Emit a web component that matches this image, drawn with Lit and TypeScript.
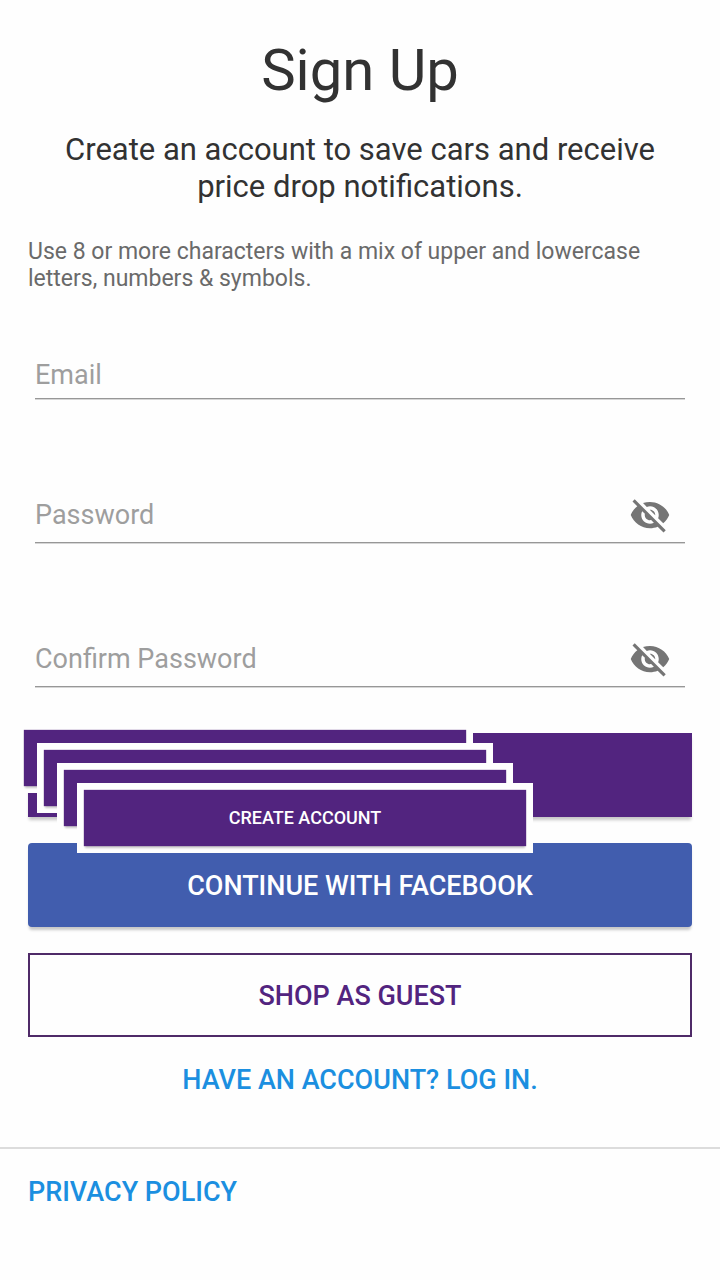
import { LitElement, html, css, svg } from "lit";
import { customElement, property, state } from "lit/decorators.js";
import { classMap } from "lit/directives/class-map.js";

const eyeOff = svg`<path d="M12 7c2.76 0 5 2.24 5 5 0 .65-.13 1.26-.36 1.83l2.92 2.92c1.51-1.26 2.7-2.89 3.43-4.75-1.73-4.39-6-7.5-11-7.5-1.4 0-2.74.25-3.98.7l2.16 2.16C10.74 7.13 11.35 7 12 7zM2 4.27l2.28 2.28.46.46C3.08 8.3 1.78 10.02 1 12c1.73 4.39 6 7.5 11 7.5 1.55 0 3.03-.3 4.38-.84l.42.42L19.73 22 21 20.73 3.27 3 2 4.27zM7.53 9.8l1.55 1.55c-.05.21-.08.43-.08.65 0 1.66 1.34 3 3 3 .22 0 .44-.03.65-.08l1.55 1.55c-.67.33-1.41.53-2.2.53-2.76 0-5-2.24-5-5 0-.79.2-1.53.53-2.2zm4.31-.78l3.15 3.15.02-.16c0-1.66-1.34-3-3-3l-.17.01z"/>`;
const eyeOn = svg`<path d="M12 4.5C7 4.5 2.73 7.61 1 12c1.73 4.39 6 7.5 11 7.5s9.27-3.11 11-7.5c-1.73-4.39-6-7.5-11-7.5zM12 17c-2.76 0-5-2.24-5-5s2.24-5 5-5 5 2.24 5 5-2.24 5-5 5zm0-8c-1.66 0-3 1.34-3 3s1.34 3 3 3 3-1.34 3-3-1.34-3-3-3z"/>`;

/** Underlined text box whose label shows until something is typed; secret ones get a show/hide toggle. */
@customElement("form-field")
class FormField extends LitElement {
  @property() label = "";
  @property({ type: Boolean }) secret = false;
  @state() private shown = false;

  static styles = css`
    :host {
      display: block;
    }
    .field {
      display: grid;
      grid-template-columns: 1fr auto;
      align-items: center;
      height: 46px;
      padding-top: 4px;
      border-bottom: 1px solid #979797;
      box-shadow: 0 1px #d6d6d6;
    }
    .secret {
      height: 54px;
      padding-top: 2px;
    }
    .label,
    .input {
      grid-area: 1 / 1;
      min-width: 0;
      padding: 0;
      font: 27px/32px Roboto, sans-serif;
    }
    .label {
      color: #9e9e9e;
    }
    .input {
      border: 0;
      outline: 0;
      background: none;
      color: #323232;
    }
    .input:not(:placeholder-shown) + .label {
      visibility: hidden;
    }
    .label {
      pointer-events: none;
    }
    .toggle {
      display: flex;
      grid-area: 1 / 2;
      margin-right: 14px;
      padding: 0;
      border: 0;
      background: none;
    }
    .icon {
      width: 42px;
      height: 42px;
      fill: #757575;
    }
  `;

  render() {
    return html`
      <div class=${classMap({ field: true, secret: this.secret })}>
        <input
          class="input"
          id="box"
          type=${this.secret ? (this.shown ? "text" : "password") : "email"}
          placeholder=" "
        />
        <label class="label" for="box">${this.label}</label>
        ${this.secret
          ? html`<button
              class="toggle"
              type="button"
              aria-label="Show password"
              aria-pressed=${this.shown}
              @click=${() => (this.shown = !this.shown)}
            >
              <svg class="icon" viewBox="0 0 24 24" aria-hidden="true">
                ${this.shown ? eyeOn : eyeOff}
              </svg>
            </button>`
          : null}
      </div>
    `;
  }
}

@customElement("app-root")
class AppRoot extends LitElement {
  static styles = css`
    :host {
      display: block;
      min-height: 100vh;
      background: #fefefe;
      color: #323232;
      font-family: Roboto, sans-serif;
    }
    .main {
      padding: 36px 28px 51px;
    }
    .title {
      margin: 0;
      font-size: 58px;
      line-height: 68px;
      font-weight: 400;
      text-align: center;
    }
    .intro {
      margin: 27px 0 0;
      font-size: 31px;
      line-height: 37px;
      text-align: center;
    }
    .hint {
      margin: 33px 0 0;
      font-size: 23px;
      line-height: 27px;
      color: #6a6a6a;
    }
    .fields {
      display: flex;
      flex-direction: column;
      gap: 87px;
      padding: 56px 7px 0;
    }
    .actions {
      display: flex;
      flex-direction: column;
      gap: 26px;
      margin-top: 46px;
    }
    .action {
      position: relative;
      height: 84px;
      padding: 2px 0 0;
      border: 0;
      font: 500 27px/32px Roboto, sans-serif;
      color: #fff;
      box-shadow: 0 4px 3px -1px #00000038;
    }
    .create {
      z-index: 1;
      background: #52247f;
    }
    .facebook {
      border-radius: 4px;
      background: #415dae;
    }
    .guest {
      border: 2px solid #4f2a68;
      background: none;
      color: #52247f;
      box-shadow: none;
    }
    /* Cascade of cards lying over the first two buttons. */
    .card {
      position: absolute;
      top: -10px;
      left: -11px;
      box-sizing: border-box;
      width: 456px;
      height: 70px;
      padding: 7px;
      background: #fefefe;
    }
    .card .card {
      top: 20px;
      left: 20px;
    }
    .face {
      display: flex;
      align-items: center;
      justify-content: center;
      height: 56px;
      background: #52247f;
      box-shadow: 0 0 1px #52247f, 0 3px 2px -1px #00000038;
      font-size: 18px;
      line-height: 22px;
    }
    .link {
      color: #1b8fe0;
      font-size: 27px;
      line-height: 32px;
      font-weight: 500;
      text-decoration: none;
    }
    .login {
      display: flex;
      justify-content: center;
      margin-top: 27px;
    }
    .footer {
      padding: 27px 28px;
      border-top: 2px solid #dcdcdc;
    }
  `;

  private cards(depth: number): unknown {
    return html`<span class="card">
      <span class="face">${depth === 1 ? "CREATE ACCOUNT" : null}</span>
      ${depth > 1 ? this.cards(depth - 1) : null}
    </span>`;
  }

  render() {
    return html`
      <main class="main">
        <h1 class="title">Sign Up</h1>
        <p class="intro">
          Create an account to save cars and receive price drop notifications.
        </p>
        <p class="hint">
          Use 8 or more characters with a mix of upper and lowercase letters,
          numbers &amp; symbols.
        </p>
        <form @submit=${(e: Event) => e.preventDefault()}>
          <div class="fields">
            <form-field label="Email"></form-field>
            <form-field label="Password" secret></form-field>
            <form-field label="Confirm Password" secret></form-field>
          </div>
          <div class="actions">
            <button class="action create" type="submit">${this.cards(4)}</button>
            <button class="action facebook" type="button">CONTINUE WITH FACEBOOK</button>
            <button class="action guest" type="button">SHOP AS GUEST</button>
          </div>
        </form>
        <div class="login">
          <a class="link" href="#login">HAVE AN ACCOUNT? LOG IN.</a>
        </div>
      </main>
      <footer class="footer">
        <a class="link" href="#privacy">PRIVACY POLICY</a>
      </footer>
    `;
  }
}
